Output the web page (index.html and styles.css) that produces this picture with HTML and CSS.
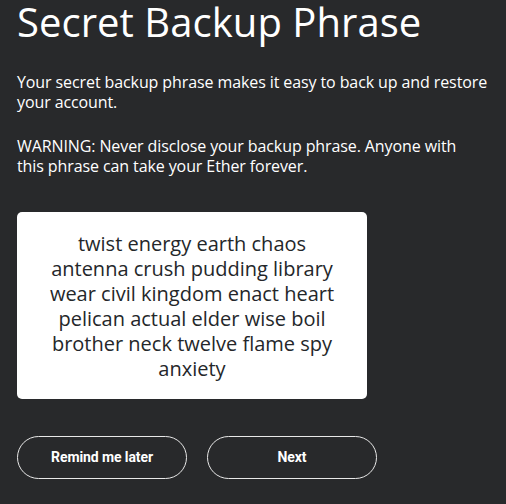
FILE: index.html
```html
<!DOCTYPE html>
<html lang="en">
<head>
<meta charset="utf-8">
<title>Secret Backup Phrase</title>
<link rel="stylesheet" href="styles.css">
</head>
<body>
<main class="page">
  <h1 class="title">Secret Backup Phrase</h1>
  <p class="text">Your secret backup phrase makes it easy to back up and restore your account.</p>
  <p class="text warning">WARNING: Never disclose your backup phrase. Anyone with<br>this phrase can take your Ether forever.</p>
  <div class="phrase">twist energy earth chaos antenna crush pudding library wear civil kingdom enact heart pelican actual elder wise boil brother neck twelve flame spy anxiety</div>
  <div class="actions">
    <button class="btn" type="button">Remind me later</button>
    <button class="btn" type="button">Next</button>
  </div>
</main>
</body>
</html>
```
FILE: styles.css
```css
html, body {
  margin: 0;
  background: #28292b;
}
.page {
  padding: 0 13px 0 17px;
  color: #ffffff;
  font-family: "Open Sans", "Noto Sans", sans-serif;
}
.title {
  margin: 0;
  font-size: 40px;
  line-height: 44px;
  font-weight: 400;
  letter-spacing: 0.05px;
}
.text {
  margin: 28px 0 0;
  width: 476px;
  font-size: 16px;
  line-height: 20px;
  letter-spacing: -0.1px;
}
.warning {
  margin-top: 24px;
}
.phrase {
  box-sizing: border-box;
  margin-top: 36px;
  width: 350px;
  height: 187px;
  padding: 19px 24px 0;
  background: #ffffff;
  border-radius: 5px;
  color: #24272a;
  font-size: 20px;
  line-height: 25px;
  text-align: center;
}
.actions {
  display: flex;
  gap: 20px;
  margin-top: 37px;
}
.btn {
  box-sizing: border-box;
  width: 170px;
  height: 43px;
  padding: 0 0 2px;
  border: 1px solid #e8e8e8;
  border-radius: 22px;
  background: transparent;
  color: #ffffff;
  font-family: Roboto, "Liberation Sans", sans-serif;
  font-weight: 700;
  font-size: 14px;
  letter-spacing: -0.1px;
  cursor: pointer;
}
```
